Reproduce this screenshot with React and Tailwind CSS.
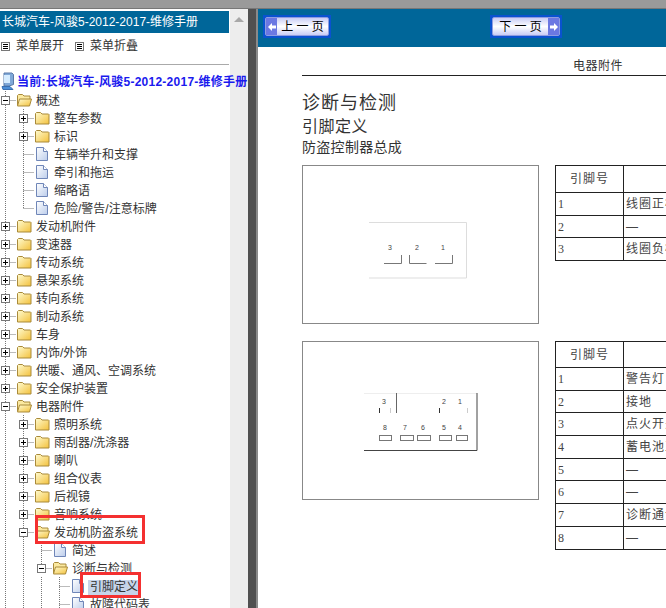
import React from "react";

const treeRows = [
  { guides: [], kind: "minus", icon: "open", label: "概述" },
  { guides: [1], kind: "plus", icon: "folder", label: "整车参数" },
  { guides: [1], kind: "plus", icon: "folder", label: "标识" },
  { guides: [1], kind: "doc", icon: "doc", label: "车辆举升和支撑" },
  { guides: [1], kind: "doc", icon: "doc", label: "牵引和拖运" },
  { guides: [1], kind: "doc", icon: "doc", label: "缩略语" },
  { guides: [1], kind: "doc", icon: "doc", label: "危险/警告/注意标牌", last: true },
  { guides: [], kind: "plus", icon: "folder", label: "发动机附件" },
  { guides: [], kind: "plus", icon: "folder", label: "变速器" },
  { guides: [], kind: "plus", icon: "folder", label: "传动系统" },
  { guides: [], kind: "plus", icon: "folder", label: "悬架系统" },
  { guides: [], kind: "plus", icon: "folder", label: "转向系统" },
  { guides: [], kind: "plus", icon: "folder", label: "制动系统" },
  { guides: [], kind: "plus", icon: "folder", label: "车身" },
  { guides: [], kind: "plus", icon: "folder", label: "内饰/外饰" },
  { guides: [], kind: "plus", icon: "folder", label: "供暖、通风、空调系统" },
  { guides: [], kind: "plus", icon: "folder", label: "安全保护装置" },
  { guides: [], kind: "minus", icon: "open", label: "电器附件" },
  { guides: [1], kind: "plus", icon: "folder", label: "照明系统" },
  { guides: [1], kind: "plus", icon: "folder", label: "雨刮器/洗涤器" },
  { guides: [1], kind: "plus", icon: "folder", label: "喇叭" },
  { guides: [1], kind: "plus", icon: "folder", label: "组合仪表" },
  { guides: [1], kind: "plus", icon: "folder", label: "后视镜" },
  { guides: [1], kind: "plus", icon: "folder", label: "音响系统" },
  { guides: [1], kind: "minus", icon: "open", label: "发动机防盗系统" },
  { guides: [1, 1], kind: "doc", icon: "doc", label: "简述" },
  { guides: [1, 1], kind: "minus", icon: "open", label: "诊断与检测", last: true },
  { guides: [1, 1, 1], kind: "doc", icon: "doc", label: "引脚定义", selected: true },
  { guides: [1, 1, 1], kind: "doc", icon: "doc", label: "故障代码表" },
];

const pins1 = [
  ["1", "线圈正极"],
  ["2", "—"],
  ["3", "线圈负极"],
];

const pins2 = [
  ["1", "警告灯"],
  ["2", "接地"],
  ["3", "点火开关"],
  ["4", "蓄电池正极"],
  ["5", "—"],
  ["6", "—"],
  ["7", "诊断通讯"],
  ["8", "—"],
];

const Guide = ({ on }) => (
  <svg width="18" height="18" className="shrink-0 block">
    {on && <line x1="5.5" y1="0" x2="5.5" y2="18" stroke="#777" strokeDasharray="1 1" />}
  </svg>
);

const Connector = ({ kind, last }) => (
  <svg width="18" height="18" className="shrink-0 block">
    <line x1="5.5" y1="0" x2="5.5" y2={last ? 9 : 18} stroke="#777" strokeDasharray="1 1" />
    <line x1="5.5" y1="9.5" x2="16" y2="9.5" stroke="#777" strokeDasharray="1 1" />
    {kind !== "doc" && (
      <>
        <rect x="1.5" y="5.5" width="8" height="8" fill="#fff" stroke="#777" />
        <line x1="3" y1="9.5" x2="8" y2="9.5" stroke="#000" />
        {kind === "plus" && <line x1="5.5" y1="7" x2="5.5" y2="12" stroke="#000" />}
      </>
    )}
  </svg>
);

const Folder = () => (
  <svg width="16" height="16" viewBox="0 0 16 16" className="ml-[-2px] shrink-0 block">
    <defs>
      <linearGradient id="folderFill" x1="0" y1="0" x2="1" y2="1">
        <stop offset="0" stopColor="#fffbd0" />
        <stop offset="1" stopColor="#f3c13c" />
      </linearGradient>
    </defs>
    <path d="M1.500 14V3.500L2.500 2.500h4L8 4h6.500l.5.500V14z" fill="url(#folderFill)" stroke="#a98a3a" />
  </svg>
);

const FolderOpen = () => (
  <svg width="16" height="16" viewBox="0 0 16 16" className="ml-[-2px] shrink-0 block">
    <defs>
      <linearGradient id="folderOpenFill" x1="0" y1="0" x2="1" y2="1">
        <stop offset="0" stopColor="#fffbd0" />
        <stop offset="1" stopColor="#f3c13c" />
      </linearGradient>
    </defs>
    <path d="M1.500 13V3.500L2.500 2.500h4L8 4h6v3" fill="#fbe9a0" stroke="#a98a3a" />
    <path d="M1.500 14l2-7h12l-2 7z" fill="url(#folderOpenFill)" stroke="#a98a3a" />
  </svg>
);

const Doc = () => (
  <svg width="16" height="16" viewBox="0 0 16 16" className="ml-[-2px] shrink-0 block">
    <defs>
      <linearGradient id="docFill" x1="0" y1="0" x2="1" y2="1">
        <stop offset="0" stopColor="#ffffff" />
        <stop offset="1" stopColor="#bccdeb" />
      </linearGradient>
    </defs>
    <path d="M2.500 1.500h7l4 4v9h-11z" fill="url(#docFill)" stroke="#6f86b8" />
    <path d="M9.500 1.500v4h4" fill="#fff" stroke="#6f86b8" />
  </svg>
);

const Computer = () => (
  <svg width="14" height="19" viewBox="0 0 14 19" className="shrink-0 block">
    <path d="M3 1h8l1.500 1.500v10L8 14H3z" fill="#7fa8d8" stroke="#5a7aa8" />
    <rect x="3" y="3" width="6" height="8" fill="#d5ecff" />
    <path d="M1 14.500h8l3 3H2z" fill="#4d8fd8" stroke="#3a6fb0" />
  </svg>
);

const MenuIcon = () => (
  <svg width="9" height="9" viewBox="0 0 9 9" className="shrink-0 block">
    <rect x="0.500" y="0.500" width="8" height="8" fill="#fff" stroke="#777" />
    <path d="M2 2.500h5M2 4.500h5M2 6.500h5" stroke="#000" />
  </svg>
);

const TreeRow = ({ row }) => (
  <div className="flex h-[18px] items-center whitespace-nowrap">
    {row.guides.map((g, i) => (
      <Guide key={i} on={g === 1} />
    ))}
    <Connector kind={row.kind} last={row.last} />
    {row.icon === "folder" && <Folder />}
    {row.icon === "open" && <FolderOpen />}
    {row.icon === "doc" && <Doc />}
    <span className={`mt-[2px] leading-[15px] ${row.selected ? "ml-[2px] bg-[#c6d4e9] px-[2px]" : "ml-[4px]"}`}>{row.label}</span>
  </div>
);

const Arrow = ({ dir }) => (
  <span className="flex w-[11px] items-center justify-center bg-[#6b78e2]">
    <svg width="8" height="8" viewBox="0 0 8 8">
      <path d={dir === "prev" ? "M0 4l4-4v2.500h4v3H4V8z" : "M8 4L4 0v2.500H0v3h4V8z"} fill="#fff" />
    </svg>
  </span>
);

const NavButton = ({ dir, label }) => (
  <button className="flex h-[23px] w-full items-stretch border-2 border-[#0a52d0] bg-[#0a52d0] text-xs text-black">
    <span className="flex flex-1 items-stretch rounded-[2px] border border-[#8f9be0] bg-gradient-to-b from-[#c9cdf5] via-white to-[#c9cdf5]">
      {dir === "prev" && <Arrow dir="prev" />}
      <span className="flex flex-1 items-center justify-center whitespace-pre">{label}</span>
      {dir === "next" && <Arrow dir="next" />}
    </span>
  </button>
);

const PinTable = ({ rows, headClass }) => (
  <table className="w-[300px] table-fixed border-collapse border border-[#444] text-xs text-[#444]">
    <tbody>
      <tr className={headClass}>
        <td className="w-[68px] border border-[#222] text-center tracking-[1px]">引脚号</td>
        <td className="border border-[#222]"></td>
      </tr>
      {rows.map(([pin, fn]) => (
        <tr key={pin} className="h-[22.7px]">
          <td className="border border-[#222] pl-[2px] font-['Liberation_Serif',serif]">{pin}</td>
          <td className="border border-[#222] pl-[2px] tracking-[1px] whitespace-nowrap">{fn}</td>
        </tr>
      ))}
    </tbody>
  </table>
);

const FigureOne = () => (
  <svg width="235" height="157" viewBox="302 165 235 157" className="block font-['Liberation_Sans',sans-serif]">
    <path d="M368 221.500h97.500v55.500H368" fill="none" stroke="#ddd" />
    <g fontSize="7" fill="#444" textAnchor="middle">
      <text x="389" y="249">3</text>
      <text x="416" y="249">2</text>
      <text x="442" y="249">1</text>
    </g>
    <g fill="none" stroke="#777">
      <path d="M383 262.500h17.500V254" />
      <path d="M408.500 254v8.500h17" />
      <path d="M434 262.500h17.500V254" />
    </g>
  </svg>
);

const FigureTwo = () => (
  <svg width="235" height="157" viewBox="302 341 235 157" className="block font-['Liberation_Sans',sans-serif]">
    <path d="M363 392.500h113" stroke="#eee" />
    <path d="M476 392v57.500H363" fill="none" stroke="#444" />
    <path d="M395.500 392v20" stroke="#666" />
    <g fontSize="7" fill="#444" textAnchor="middle">
      <text x="383" y="403">3</text>
      <text x="443" y="403">2</text>
      <text x="459" y="403">1</text>
      <text x="384" y="429">8</text>
      <text x="404" y="429">7</text>
      <text x="422" y="429">6</text>
      <text x="443" y="429">5</text>
      <text x="459" y="429">4</text>
    </g>
    <path d="M378.500 407v5M438.500 407v5" stroke="#333" />
    <path d="M389.500 407v5M466.500 407v5" stroke="#ccc" />
    <g fill="none" stroke="#777">
      <rect x="378.500" y="434.500" width="12" height="5" />
      <rect x="399.500" y="434.500" width="13" height="5" />
      <rect x="416.500" y="434.500" width="13" height="5" />
      <rect x="438.500" y="434.500" width="12" height="5" />
      <rect x="455.500" y="434.500" width="11" height="5" />
    </g>
  </svg>
);

const PinSection = ({ figure, rows, headClass, className }) => (
  <div className={`flex items-start gap-[16px] ${className}`}>
    <div className="h-[159px] w-[237px] shrink-0 border border-[#888]">{figure}</div>
    <PinTable rows={rows} headClass={headClass} />
  </div>
);

export default function App() {
  return (
    <div className="relative flex h-[608px] w-[666px] flex-col overflow-hidden bg-white font-['Liberation_Sans','Noto_Sans_CJK_SC',sans-serif] text-xs text-[#333]">
      <div className="h-[9px] shrink-0 border-b border-[#777] bg-[#9a9a9a]"></div>

      <div className="flex min-h-0 flex-1">
        <aside className="relative z-10 w-[229px] shrink-0">
          <div className="mt-[2px] flex h-[22px] items-center bg-[#006699] pl-[2px] whitespace-nowrap text-white">
            长城汽车-风骏5-2012-2017-维修手册
          </div>
          <div className="mt-[1px] flex h-[24px] items-center pl-[1px]">
            <MenuIcon />
            <span className="ml-[6px] w-[59px]">菜单展开</span>
            <MenuIcon />
            <span className="ml-[6px]">菜单折叠</span>
          </div>
          <div className="mt-[6px] border-b border-[#aaa]"></div>
          <div className="flex h-[26px] w-[248px] items-end overflow-hidden">
            <span className="ml-[1px] w-[16px]">
              <Computer />
            </span>
            <span className="mb-[1px] font-bold tracking-[0.25px] whitespace-nowrap text-[#1a1aee]">当前:长城汽车-风骏5-2012-2017-维修手册</span>
          </div>
          <div>
            {treeRows.map((row) => (
              <TreeRow key={row.label} row={row} />
            ))}
          </div>
        </aside>

        <div className="w-[19px] shrink-0 border-l border-white bg-[#ededed] pt-[3px]">
          <svg width="18" height="14" viewBox="0 0 18 14" className="block">
            <path d="M4 10l5-5 5 5z" fill="#a8a8a8" />
          </svg>
        </div>
        <div className="w-[8px] shrink-0 bg-[#505050]"></div>

        <main className="min-w-0 flex-1 overflow-hidden border-l-2 border-[#8a8a8a]">
          <div className="flex h-[38px] items-center gap-[159px] bg-[#006699] pb-[3px] pl-[5px]">
            <div className="w-[68px]">
              <NavButton dir="prev" label="上 一 页" />
            </div>
            <div className="w-[72px]">
              <NavButton dir="next" label="下 一 页" />
            </div>
          </div>

          <div className="ml-[44px] w-[592px]">
            <div className="flex h-[29px] items-end justify-center border-b border-[#222] pb-[1px] tracking-[0.5px]">电器附件</div>
            <h1 className="mt-[15px] text-[18px] leading-[24px] tracking-[1px]">诊断与检测</h1>
            <h2 className="text-[16px] leading-[24px] tracking-[0.5px]">引脚定义</h2>
            <h3 className="mt-[-1px] mb-[1px] text-[14px] leading-[19px] tracking-[0.3px]">防盗控制器总成</h3>
            <PinSection className="mt-[8px]" figure={<FigureOne />} rows={pins1} headClass="h-[27px]" />
            <PinSection className="mt-[17px]" figure={<FigureTwo />} rows={pins2} headClass="h-[26px]" />
          </div>
        </main>
      </div>

      <div className="absolute left-[35px] top-[515px] z-20 h-[29px] w-[110px] border-[3px] border-[#f43030]"></div>
      <div className="absolute left-[80px] top-[572px] z-20 h-[26px] w-[61px] border-[3px] border-[#f43030]"></div>
    </div>
  );
}
